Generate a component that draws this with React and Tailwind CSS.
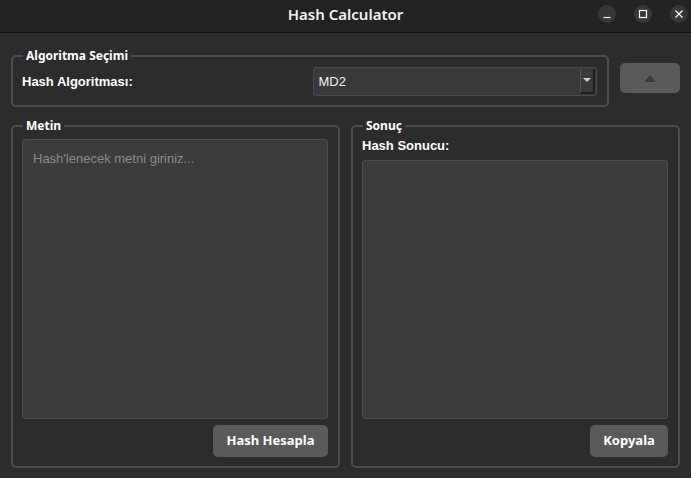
import React from "react";

const sans = { fontFamily: '"Liberation Sans", Arial, sans-serif' };

function WinButton({ children }) {
  return (
    <div className="w-[18px] h-[18px] rounded-full bg-[#373737] flex items-center justify-center">
      {children}
    </div>
  );
}

function Group({ title, className, children }) {
  return (
    <fieldset
      className={
        "border-2 border-[#4d4d4d] rounded-[5px] pl-[9px] pr-[10px] " + (className || "")
      }
    >
      <legend className="ml-[1px] px-[3px] text-[12px] font-bold text-white font-['Noto_Sans',sans-serif] leading-[16px]">
        {title}
      </legend>
      {children}
    </fieldset>
  );
}

export default function App() {
  return (
    <div className="w-[691px] h-[478px] bg-[#2c2c2c] flex flex-col overflow-hidden">
      {/* title bar */}
      <div className="h-[33px] shrink-0 bg-[#222222] border-b border-[#111111] relative flex items-center justify-center">
        <span className="text-[15px] font-semibold text-[#f2f2f2] font-['Noto_Sans',sans-serif] -mt-[4px]">
          Hash Calculator
        </span>
        <div className="absolute right-[3px] top-[5px] flex gap-[18px]">
          <WinButton>
            <svg width="10" height="10" viewBox="0 0 10 10">
              <path d="M1.5 8.5h7" stroke="#fff" strokeWidth="1.2" />
            </svg>
          </WinButton>
          <WinButton>
            <svg width="10" height="10" viewBox="0 0 10 10">
              <rect x="1.5" y="1.5" width="7" height="7" fill="none" stroke="#fff" strokeWidth="1.2" />
            </svg>
          </WinButton>
          <WinButton>
            <svg width="10" height="10" viewBox="0 0 10 10">
              <path d="M1.5 1.5l7 7M8.5 1.5l-7 7" stroke="#fff" strokeWidth="1.2" />
            </svg>
          </WinButton>
        </div>
      </div>

      {/* content */}
      <div className="flex-1 flex flex-col px-[11px] pt-[15px] pb-[10px] gap-[11px]" style={sans}>
        <div className="flex items-start gap-[11px]">
          <Group title="Algoritma Seçimi" className="flex-1 pb-[9px] pt-[3px]">
            <div className="grid grid-cols-2 gap-[6px] items-center">
              <span className="text-[13px] font-bold text-white">Hash Algoritması:</span>
              <div className="h-[29px] bg-[#3a3a3a] border border-[#4a4a4a] rounded-[3px] flex items-center justify-between pl-[5px] pr-[1px]">
                <span className="text-[13px] text-[#f0f0f0]">MD2</span>
                <div className="w-[15px] h-[25px] bg-[#3a3a3a] border-l border-[#555555] border-r-2 border-b-2 border-r-[#1e1e1e] border-b-[#1e1e1e] flex items-center justify-center">
                  <svg width="8" height="5" viewBox="0 0 8 5">
                    <path d="M0 0h8L4 4z" fill="#d0d0d0" />
                  </svg>
                </div>
              </div>
            </div>
          </Group>
          <button className="mt-[15px] w-[60px] h-[30px] rounded-[5px] bg-[#5a5a5a] flex items-center justify-center">
            <svg width="12" height="7" viewBox="0 0 12 7">
              <path d="M6 0L12 7H0z" fill="#3a3a3a" />
            </svg>
          </button>
        </div>

        <div className="flex-1 flex gap-[11px] min-h-0">
          <Group title="Metin" className="flex-1 flex flex-col pb-[9px] pt-[5px] min-h-0">
            <div className="flex flex-col h-full gap-[6px]">
              <textarea
                className="flex-1 resize-none bg-[#3c3c3c] border border-[#4e4e4e] rounded-[3px] px-[10px] py-[9px] text-[13px] text-white placeholder:text-[#8a8a8a] outline-none"
                placeholder="Hash'lenecek metni giriniz..."
                style={sans}
              />
              <div className="flex justify-end">
                <button className="w-[115px] h-[32px] rounded-[5px] bg-[#5a5a5a] text-[13px] font-bold text-white font-['Noto_Sans',sans-serif]">
                  Hash Hesapla
                </button>
              </div>
            </div>
          </Group>
          <Group title="Sonuç" className="flex-1 flex flex-col pb-[9px] pt-[3px] min-h-0">
            <div className="flex flex-col h-full">
              <span className="text-[13px] font-bold text-white leading-[17px] mb-[6px]">Hash Sonucu:</span>
              <textarea
                readOnly
                className="flex-1 resize-none bg-[#3c3c3c] border border-[#4e4e4e] rounded-[3px] px-[10px] py-[9px] text-[13px] text-white outline-none"
                style={sans}
              />
              <div className="flex justify-end mt-[6px]">
                <button className="w-[78px] h-[32px] rounded-[5px] bg-[#5a5a5a] text-[13px] font-bold text-white font-['Noto_Sans',sans-serif]">
                  Kopyala
                </button>
              </div>
            </div>
          </Group>
        </div>
      </div>
    </div>
  );
}
